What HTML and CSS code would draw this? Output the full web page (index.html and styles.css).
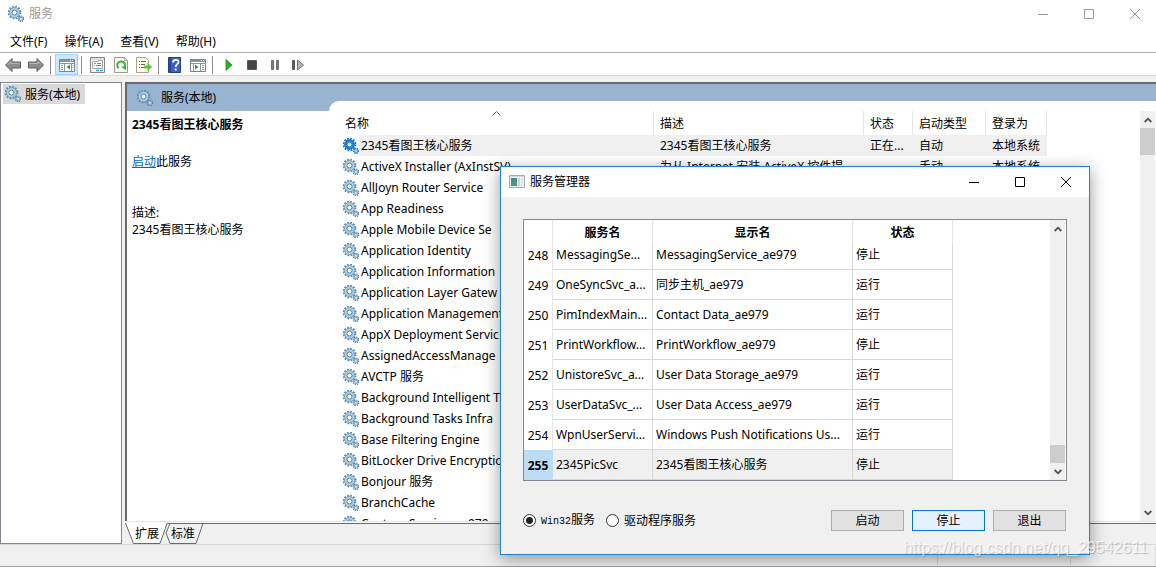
FILE: index.html
```html
<!DOCTYPE html>
<html lang="zh-CN">
<head>
<meta charset="utf-8">
<title>服务</title>
<link rel="stylesheet" href="styles.css">
</head>
<body>
<svg class="defs" aria-hidden="true">
  <symbol id="gear" viewBox="0 0 16 16">
    <circle cx="6.5" cy="6.5" r="6" fill="none" stroke="#5d87a6" stroke-width="1.8" stroke-dasharray="1.7 1.44"/>
    <circle cx="6.500" cy="6.500" r="4" fill="#e8f3fa" stroke="#a5cfe9" stroke-width="2.600"/>
    <circle cx="6.500" cy="6.500" r="5.200" fill="none" stroke="#6c97b5" stroke-width=".8"/>
    <circle cx="6.500" cy="6.500" r="2.500" fill="#fff" stroke="#587b96" stroke-width="1"/>
    <circle cx="13" cy="12.800" r="2.700" fill="none" stroke="#55799a" stroke-width="1.300" stroke-dasharray="1.200 .92"/>
    <circle cx="13" cy="12.800" r="1.600" fill="#fff" stroke="#84b0cd" stroke-width="1.500"/>
  </symbol>
  <symbol id="gear-on" viewBox="0 0 16 16">
    <circle cx="6.5" cy="6.5" r="6" fill="none" stroke="#0f6fc4" stroke-width="1.8" stroke-dasharray="1.7 1.44"/>
    <circle cx="6.5" cy="6.5" r="4" fill="#bfe0f7" stroke="#2c8fdc" stroke-width="2.8"/>
    <circle cx="6.5" cy="6.5" r="4.2" fill="none" stroke="#0a6cc2" stroke-width="2" stroke-dasharray="1 1"/>
    <circle cx="6.5" cy="6.5" r="2.4" fill="#d8edfa" stroke="#0f64b0" stroke-width=".8"/>
    <circle cx="13" cy="12.8" r="2.3" fill="#a9d3f0" stroke="#1473c4" stroke-width="1.8" stroke-dasharray="1.1 .7"/>
  </symbol>
  <symbol id="win-min" viewBox="0 0 10 10"><path d="M0 5.5h10" fill="none" stroke="currentColor"/></symbol>
  <symbol id="win-max" viewBox="0 0 10 10"><path d="M.5.5h9v9h-9z" fill="none" stroke="currentColor"/></symbol>
  <symbol id="win-close" viewBox="0 0 10 10"><path d="M0 0l10 10M10 0L0 10" fill="none" stroke="currentColor"/></symbol>
  <symbol id="up" viewBox="0 0 8 6"><path d="M.7 5L4 1.7 7.3 5" fill="none" stroke="#505050" stroke-width="1.8"/></symbol>
  <symbol id="down" viewBox="0 0 8 6"><path d="M.7 1L4 4.3 7.3 1" fill="none" stroke="#505050" stroke-width="1.8"/></symbol>
</svg>

<div class="window">
  <header class="titlebar">
    <svg class="icon"><use href="#gear"/></svg>
    <h1 class="title">服务</h1>
    <div class="controls">
      <button aria-label="最小化"><svg><use href="#win-min"/></svg></button>
      <button aria-label="最大化"><svg><use href="#win-max"/></svg></button>
      <button aria-label="关闭"><svg><use href="#win-close"/></svg></button>
    </div>
  </header>

  <nav class="menubar">
    <button>文件(F)</button>
    <button>操作(A)</button>
    <button>查看(V)</button>
    <button>帮助(H)</button>
  </nav>

  <div class="toolbar">
    <button aria-label="后退"><svg viewBox="0 0 16 16"><path d="M.5 8L7 1.500v3.500h8.500v6H7v3.500z" fill="#8c8c8c" stroke="#5e5e5e"/><path d="M3 7.500L6 4.500V6.500h8.500" fill="none" stroke="#b8b8b8"/></svg></button>
    <button aria-label="前进"><svg viewBox="0 0 16 16"><path d="M15.500 8L9 1.500v3.500H.5v6H9v3.500z" fill="#8c8c8c" stroke="#5e5e5e"/><path d="M1.500 6.500H10v-2l3 3" fill="none" stroke="#b8b8b8"/></svg></button>
    <span class="sep"></span>
    <button class="pressed" aria-label="显示/隐藏控制台树"><svg viewBox="0 0 16 16"><path d="M.5 2.500h15v12H.5z" fill="#fff" stroke="#7b858f"/><path d="M1 3h14v2H1z" fill="#8994a0"/><path d="M11 3.500h1M13 3.500h1" stroke="#fff"/><path d="M1 6.500h14M5.500 6v8M12.500 6v8" stroke="#8994a0"/><path d="M2 8.500h2M2 10.500h2M2 12.500h2M13.500 8.500h1M13.500 10.500h1" stroke="#6f9fc8"/><path d="M11 7.500v5L7.500 10z" fill="#2ea12e"/></svg></button>
    <span class="sep"></span>
    <button aria-label="属性"><svg viewBox="0 0 16 16"><path d="M.5.5h14v15H.5z" fill="#f7f7f7" stroke="#868686"/><path d="M1 2h13" stroke="#c4c4c4"/><path d="M2.500 4.500h6v-1h4v8h-10z" fill="#fff" stroke="#9aa6b2"/><path d="M4 6.500h2M7 6.500h4M4 8.500h1M6 8.500h5" stroke="#7188a0"/><path d="M6 13.500h3M10 13.500h3" stroke="#36a6cf" stroke-width="1.500"/></svg></button>
    <button aria-label="刷新"><svg viewBox="0 0 16 16"><path d="M1.500.5h10l3 3v12h-13z" fill="#f8f8f4" stroke="#9b9b93"/><path d="M11.500.5v3h3" fill="none" stroke="#b4b4ac"/><path d="M5.500 11.200A3.900 3.900 0 1 1 11 11" fill="none" stroke="#37b637" stroke-width="2"/><path d="M8 9.500h5v4z" fill="#37b637"/></svg></button>
    <button aria-label="导出列表"><svg viewBox="0 0 16 16"><path d="M.5.5h9l3 3v12H.5z" fill="#fffce9" stroke="#a5a28f"/><path d="M3 4.500h1M3 7.500h1M3 10.500h1M5 4.500h5M5 7.500h4M5 10.500h3" stroke="#66665e"/><path d="M8 8.500h3.500V6L16 10l-4.500 4v-2.500H8z" fill="#5cc33c" stroke="#a0df84" stroke-width=".6"/></svg></button>
    <span class="sep"></span>
    <button aria-label="帮助"><svg viewBox="0 0 16 16"><path d="M1.500.5h12v15h-12z" fill="#3e5fc0" stroke="#233d8b"/><path d="M2 1h2v14H2z" fill="#2b479d"/><path d="M6 5.500C6 2 11.500 2 11.500 5c0 2.200-2.800 2-2.800 5M8.700 11.500v2" fill="none" stroke="#fff" stroke-width="1.800"/></svg></button>
    <button aria-label="显示/隐藏操作窗格"><svg viewBox="0 0 16 16"><path d="M.5 2.500h15v12H.5z" fill="#fff" stroke="#7b858f"/><path d="M1 3h14v2H1z" fill="#8994a0"/><path d="M11 3.500h1M13 3.500h1" stroke="#fff"/><path d="M1 6.500h14M3.500 6v8M10.500 6v8" stroke="#8994a0"/><path d="M12 8.500h2M12 10.500h2M12 12.500h2" stroke="#6f9fc8"/><path d="M5 7.500v5L8.500 10z" fill="#2ea12e"/></svg></button>
    <span class="sep"></span>
    <button aria-label="启动服务"><svg viewBox="0 0 16 16"><path d="M5 2.500v11L11 8z" fill="#22b422" stroke="#169116" stroke-width=".8"/></svg></button>
    <button aria-label="停止服务"><svg viewBox="0 0 16 16"><path d="M3.500 3.500h9v9h-9z" fill="#454545" stroke="#5a5a5a"/></svg></button>
    <button aria-label="暂停服务"><svg viewBox="0 0 16 16"><path d="M4.500 3.500h2v9h-2zM9.500 3.500h2v9h-2z" fill="#777" stroke="#5d5d5d" stroke-width=".8"/></svg></button>
    <button aria-label="重新启动服务"><svg viewBox="0 0 16 16"><path d="M2.500 3.500h2v9h-2z" fill="#555" stroke="#444" stroke-width=".8"/><path d="M7.500 3v10l6-5z" fill="#b4b4b4" stroke="#777"/></svg></button>
  </div>

  <main class="workspace">
    <aside class="tree">
      <a class="tree-item" href="#"><svg class="icon"><use href="#gear"/></svg>服务(本地)</a>
    </aside>

    <section class="content">
      <div class="pane">
        <div class="detail">
          <h2 class="pane-title"><svg class="icon"><use href="#gear"/></svg>服务(本地)</h2>
          <div class="detail-body">
            <h3>2345看图王核心服务</h3>
            <p class="action"><a href="#">启动</a>此服务</p>
            <p>描述:</p>
            <p>2345看图王核心服务</p>
          </div>
        </div>
        <div class="list-wrap">
          <div class="list">
            <div class="rows">
              <table class="services">
                <colgroup><col class="c-name"><col class="c-desc"><col class="c-state"><col class="c-start"><col class="c-login"></colgroup>
                <thead>
                  <tr><th class="sorted">名称<svg class="sort" viewBox="0 0 9 5"><path d="M.5 4.500l4-4 4 4" fill="none" stroke="#666"/></svg></th><th>描述</th><th>状态</th><th>启动类型</th><th>登录为</th></tr>
                </thead>
                <tbody>
                  <tr class="selected"><td><svg class="icon"><use href="#gear-on"/></svg>2345看图王核心服务</td><td>2345看图王核心服务</td><td>正在...</td><td>自动</td><td>本地系统</td></tr>
                  <tr><td><svg class="icon"><use href="#gear"/></svg>ActiveX Installer (AxInstSV)</td><td>为从 Internet 安装 ActiveX 控件提</td><td></td><td>手动</td><td>本地系统</td></tr>
                  <tr><td><svg class="icon"><use href="#gear"/></svg>AllJoyn Router Service</td></tr>
                  <tr><td><svg class="icon"><use href="#gear"/></svg>App Readiness</td></tr>
                  <tr><td><svg class="icon"><use href="#gear"/></svg>Apple Mobile Device Se</td></tr>
                  <tr><td><svg class="icon"><use href="#gear"/></svg>Application Identity</td></tr>
                  <tr><td><svg class="icon"><use href="#gear"/></svg>Application Information</td></tr>
                  <tr><td><svg class="icon"><use href="#gear"/></svg>Application Layer Gatew</td></tr>
                  <tr><td><svg class="icon"><use href="#gear"/></svg>Application Management</td></tr>
                  <tr><td><svg class="icon"><use href="#gear"/></svg>AppX Deployment Servic</td></tr>
                  <tr><td><svg class="icon"><use href="#gear"/></svg>AssignedAccessManage</td></tr>
                  <tr><td><svg class="icon"><use href="#gear"/></svg>AVCTP 服务</td></tr>
                  <tr><td><svg class="icon"><use href="#gear"/></svg>Background Intelligent T</td></tr>
                  <tr><td><svg class="icon"><use href="#gear"/></svg>Background Tasks Infra</td></tr>
                  <tr><td><svg class="icon"><use href="#gear"/></svg>Base Filtering Engine</td></tr>
                  <tr><td><svg class="icon"><use href="#gear"/></svg>BitLocker Drive Encryptio</td></tr>
                  <tr><td><svg class="icon"><use href="#gear"/></svg>Bonjour 服务</td></tr>
                  <tr><td><svg class="icon"><use href="#gear"/></svg>BranchCache</td></tr>
                  <tr><td><svg class="icon"><use href="#gear"/></svg>Capture Service_ae979</td></tr>
                </tbody>
              </table>
            </div>
            <div class="scrollbar">
              <svg><use href="#up"/></svg>
              <div class="track"><div class="thumb"></div></div>
              <svg><use href="#down"/></svg>
            </div>
          </div>
        </div>
      </div>
      <div class="tabs">
        <svg class="tab-shape" viewBox="0 0 80 21"><path d="M41 10L45 .5h33L71 20.500H45z" fill="#f0f0f0" stroke="#696969"/><path d="M0 0h42L35 20.500H8.500z" fill="#fff"/><path d="M.5 0l8 20.500H35L42 .5" fill="none" stroke="#696969"/></svg>
        <button>扩展</button>
        <button>标准</button>
      </div>
    </section>
  </main>
  <footer class="statusbar"><span></span><span></span><span></span></footer>
</div>

<div class="dialog" role="dialog" aria-labelledby="dialog-title">
  <header class="dialog-bar">
    <svg class="icon" viewBox="0 0 16 16"><path d="M.5 1.500h15v12H.5z" fill="#f1f3f5" stroke="#a3a9ae"/><path d="M1 2h14v1H1z" fill="#d5dade"/><path d="M2 4h6v8H2z" fill="#4b9480"/><path d="M2 4h3v4H2z" fill="#4f7fa7"/><path d="M9 4h2v8H9z" fill="#c8d4d8"/><path d="M12 4h2v8h-2z" fill="#dde3e6"/></svg>
    <h2 class="title" id="dialog-title">服务管理器</h2>
    <div class="controls">
      <button aria-label="最小化"><svg><use href="#win-min"/></svg></button>
      <button aria-label="最大化"><svg><use href="#win-max"/></svg></button>
      <button aria-label="关闭"><svg><use href="#win-close"/></svg></button>
    </div>
  </header>
  <div class="dialog-body">
    <div class="grid-frame">
      <table class="grid">
        <colgroup><col class="g-num"><col class="g-svc"><col class="g-label"><col class="g-state"></colgroup>
        <thead><tr><th></th><th>服务名</th><th>显示名</th><th>状态</th></tr></thead>
        <tbody>
          <tr class="cut"><th>248</th><td>MessagingSe...</td><td>MessagingService_ae979</td><td>停止</td></tr>
          <tr><th>249</th><td>OneSyncSvc_a...</td><td>同步主机_ae979</td><td>运行</td></tr>
          <tr><th>250</th><td>PimIndexMain...</td><td>Contact Data_ae979</td><td>运行</td></tr>
          <tr><th>251</th><td>PrintWorkflow...</td><td>PrintWorkflow_ae979</td><td>停止</td></tr>
          <tr><th>252</th><td>UnistoreSvc_a...</td><td>User Data Storage_ae979</td><td>运行</td></tr>
          <tr><th>253</th><td>UserDataSvc_...</td><td>User Data Access_ae979</td><td>运行</td></tr>
          <tr><th>254</th><td>WpnUserServi...</td><td>Windows Push Notifications Us...</td><td>运行</td></tr>
          <tr class="current"><th>255</th><td>2345PicSvc</td><td>2345看图王核心服务</td><td>停止</td></tr>
        </tbody>
      </table>
      <div class="scrollbar end">
        <svg><use href="#up"/></svg>
        <div class="track"><div class="thumb"></div></div>
        <svg><use href="#down"/></svg>
      </div>
    </div>
    <div class="actions">
      <label><input type="radio" name="kind" checked><span><span class="mono">Win32</span>服务</span></label>
      <label><input type="radio" name="kind"><span>驱动程序服务</span></label>
      <div class="buttons">
        <button>启动</button>
        <button class="default">停止</button>
        <button>退出</button>
      </div>
    </div>
  </div>
</div>
<div class="watermark">https://blog.csdn.net/qq_29542611</div>
</body>
</html>
```
FILE: styles.css
```css
* { box-sizing: border-box; }
body {
  margin: 0;
  height: 100vh;
  overflow: hidden;
  position: relative;
  background: #f0f0f0;
  color: #000;
  font: 12px/17px "Noto Sans", "Noto Sans CJK SC", sans-serif;
}
h1, h2, h3, p { margin: 0; font-size: 12px; font-weight: 400; }
button { font: inherit; color: inherit; border: 0; padding: 0; background: none; }
svg { display: block; flex: none; }
.defs { position: absolute; width: 0; height: 0; }
.icon { width: 16px; height: 16px; }

.window { height: 100%; display: flex; flex-direction: column; border-bottom: 1px solid #a0a0a0; }
.titlebar { height: 27px; flex: none; display: flex; align-items: center; gap: 5px; padding-left: 8px; background: #fff; color: #999; }
.controls { display: flex; margin-left: auto; }
.controls button { width: 46px; height: 27px; display: grid; place-items: center; }
.controls svg { width: 10px; height: 10px; }
.titlebar .controls { margin-right: -2px; }

.menubar { height: 26px; flex: none; display: flex; align-items: center; gap: 17px; padding: 3px 0 0 10px; background: #fff; border-bottom: 1px solid #adadad; }
.toolbar { height: 23px; flex: none; display: flex; align-items: center; padding: 1px 0 0 1px; background: #fff; border-bottom: 1px solid #d9d9d9; }
.toolbar button { width: 23px; height: 21px; display: grid; place-items: center; }
.toolbar svg { width: 16px; height: 16px; }
.toolbar .pressed { background: #cce8ff; border: 1px solid #99d1ff; }
.sep { width: 8px; height: 18px; background: linear-gradient(#8a8a8a, #8a8a8a) 3px 0 / 1px 100% no-repeat; }

.workspace { flex: 1; min-height: 0; display: flex; gap: 3px; padding-top: 6px; }
.tree { width: 122px; flex: none; background: #fff; border: 1px solid #828790; padding: 1px 2px; }
.tree-item { display: inline-flex; align-items: center; gap: 4px; height: 20px; padding: 0 5px 0 2px; background: #d9d9d9; color: #000; text-decoration: none; }

.content { flex: 1; min-width: 0; display: flex; flex-direction: column; }
.pane { flex: 1; min-height: 0; display: flex; background: #fff; border: solid #696969; border-width: 2px 0 0 2px; }
.detail { width: 202px; flex: none; }
.pane-title { height: 27px; display: flex; align-items: center; gap: 8px; padding-left: 10px; background: #99b4d1; }
.detail-body { padding: 5px; }
.detail-body h3 { font-weight: 700; }
.action { padding: 20px 0 34px; }
.action a { color: #0066cc; }
.list-wrap { flex: 1; min-width: 0; display: flex; padding-top: 17px; background: #99b4d1; }
.list { flex: 1; min-width: 0; display: flex; padding: 10px 0 0 7px; background: #fff; border-top-left-radius: 10px; }
.rows { flex: 1; min-width: 0; overflow: hidden; }

.services { table-layout: fixed; border-collapse: separate; border-spacing: 0; width: 711px; }
.c-name { width: 318px; }
.c-desc { width: 210px; }
.c-state { width: 49px; }
.c-start { width: 73px; }
.c-login { width: 61px; }
.services th { height: 24px; padding: 0 6px; font-weight: 400; text-align: left; border-right: 1px solid #e5e5e5; }
.services .sorted { padding-left: 9px; position: relative; }
.sort { position: absolute; left: 156px; top: 0; width: 9px; height: 5px; }
.services td { height: 21px; padding: 0 0 0 6px; white-space: nowrap; }
.services td:first-child { display: flex; align-items: center; gap: 2px; padding-left: 7px; }
.selected td { background: #f0f0f0; }
.services .selected td:first-child { background: linear-gradient(to right, #fff 23px, #f0f0f0 23px); }

.scrollbar { width: 16px; flex: none; display: flex; flex-direction: column; align-items: center; justify-content: space-between; background: #f0f0f0; border-right: 1px solid #fff; }
.scrollbar svg { width: 8px; height: 6px; margin: 6px 0 5px; }
.track { flex: 1; width: 100%; display: flex; flex-direction: column; }
.thumb { height: 27px; background: #cdcdcd; }
.scrollbar.end .track { justify-content: flex-end; }
.scrollbar.end .thumb { height: 18px; }

.tabs { height: 23px; flex: none; display: flex; gap: 12px; padding: 2px 0 1px 10px; position: relative; background: linear-gradient(#e3e3e3 1px, #fff 1px, #fff 2px, #696969 2px, #696969 3px, transparent 3px); }
.tabs button { position: relative; }
.tab-shape { position: absolute; left: 0; top: 2px; width: 80px; height: 21px; }
.statusbar { height: 22px; flex: none; display: flex; justify-content: flex-end; border-top: 1px solid #d7d7d7; }
.statusbar span { border-right: 1px solid #d7d7d7; width: 133px; margin: 1px 0; }
.statusbar span:last-child { width: 85px; }

.dialog {
  position: absolute; left: 500px; top: 166px; width: 590px;
  background: #f0f0f0; border: 1px solid #1883d7;
  box-shadow: 0 4px 16px rgba(0, 0, 0, .4);
}
.dialog-bar { height: 30px; display: flex; align-items: center; gap: 5px; padding: 0 0 1px 8px; background: #fff; }
.dialog-body { padding: 22px 22px 23px; }
.grid-frame { display: flex; justify-content: space-between; background: #fff; border: 1px solid #828790; }
.grid { table-layout: fixed; border-collapse: separate; border-spacing: 0; width: 429px; }
.g-num { width: 29px; }
.g-svc { width: 100px; }
.g-label { width: 200px; }
.g-state { width: 100px; }
.grid th { padding: 0; text-align: center; }
.grid thead th { height: 25px; border-right: 1px solid #e5e5e5; }
.grid td { height: 30px; padding: 0 0 0 3px; white-space: nowrap; border: solid #d8d8d8; border-width: 0 1px 1px 0; }
.grid tbody th { font-weight: 400; border-right: 1px solid #e5e5e5; }
.grid .cut td { height: 25px; padding-bottom: 5px; }
.grid .cut th { padding-bottom: 4px; }
.grid .current td { background: #f0f0f0; }
.grid .current th { background: #bcdcf4; border-color: #bcdcf4; font-weight: 700; }

.actions { display: flex; align-items: center; gap: 11px; padding: 29px 1px 0 0; }
.actions label { display: flex; align-items: center; gap: 5px; }
.actions input { appearance: none; width: 13px; height: 13px; margin: 0; border: 1px solid #333; border-radius: 50%; background: #fff; }
.actions input:checked { background: radial-gradient(circle, #222 3px, #fff 4px); }
.mono { font: 10px/17px "Liberation Mono", monospace; }
.buttons { display: flex; gap: 8px; margin-left: auto; }
.buttons button { width: 73px; height: 21px; background: #e1e1e1; border: 1px solid #adadad; }
.buttons .default { background: #e5f1fb; border-color: #0078d7; }

.watermark {
  position: absolute; right: 8px; bottom: 9px;
  font: 16px/20px "Liberation Sans", Arial, sans-serif;
  color: rgba(255, 255, 255, .7);
  text-shadow: 1px 1px 1px rgba(0, 0, 0, .2);
}
```
